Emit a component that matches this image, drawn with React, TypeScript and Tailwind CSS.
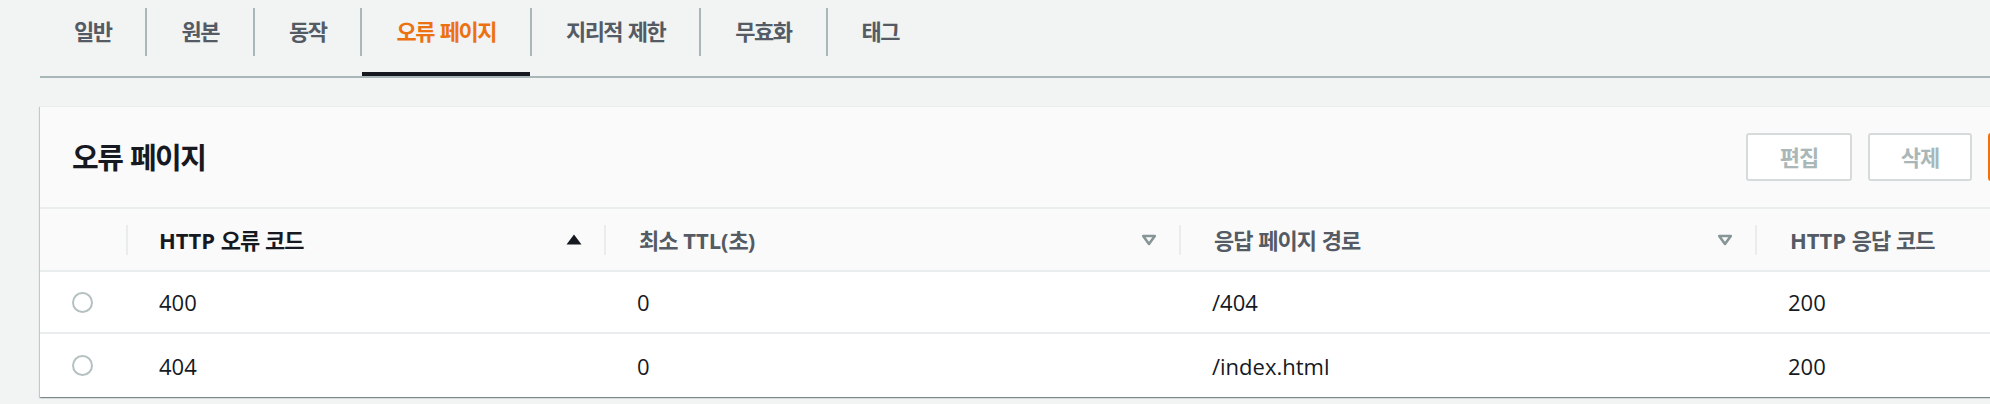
import React from "react";

function K({ t, cls = "tracking-[-1px]" }: { t: string; cls?: string }) {
  const parts = t.split(/([\uAC00-\uD7A3]+)/);
  return (
    <>
      {parts.map((p, i) =>
        /[\uAC00-\uD7A3]/.test(p) ? (
          <span key={i} className={cls}>
            {p}
          </span>
        ) : (
          <span key={i}>{p}</span>
        )
      )}
    </>
  );
}

const tabs = ["일반", "원본", "동작", "오류 페이지", "지리적 제한", "무효화", "태그"];
const active = 3;

function SortUp() {
  return (
    <svg width="16" height="11" viewBox="0 0 16 11">
      <path d="M8 0.5 L15.5 10.5 H0.5 Z" fill="#16191f" />
    </svg>
  );
}

function SortDown() {
  return (
    <svg width="16" height="12" viewBox="0 0 16 12">
      <path
        d="M2.2 2 H13.8 L8 10 Z"
        fill="none"
        stroke="#879596"
        strokeWidth="2.6"
        strokeLinejoin="round"
      />
    </svg>
  );
}

const cols = [
  { label: "HTTP 오류 코드", w: "w-[478px] shrink-0", sorted: true },
  { label: "최소 TTL(초)", w: "w-[575px] shrink-0", sorted: false },
  { label: "응답 페이지 경로", w: "w-[576px] shrink-0", sorted: false },
  { label: "HTTP 응답 코드", w: "w-[470px] shrink-0", sorted: false },
];

const rows = [
  ["400", "0", "/404", "200"],
  ["404", "0", "/index.html", "200"],
];

export default function App() {
  return (
    <div className="w-[1990px] h-[404px] overflow-hidden bg-[#f2f3f3] font-['Open_Sans','Noto_Sans_CJK_KR',sans-serif]">
      {/* Tabs */}
      <div className="ml-[40px] flex h-[78px] border-b-2 border-[#aab7b8]">
        {tabs.map((t, i) => (
          <div key={t} className="relative h-full">
            <div
              className={
                i === 0
                  ? "mt-[8px] flex h-[48px] items-center px-[34px]"
                  : "mt-[8px] flex h-[48px] items-center border-l-2 border-[#aab7b8] px-[34px]"
              }
            >
              <span
                className={
                  i === active
                    ? "text-[22px] font-bold leading-none text-[#ec7211] pb-[3px]"
                    : "text-[22px] font-bold leading-none text-[#545b64] pb-[3px]"
                }
              >
                <K t={t} cls="tracking-[-1.5px]" />
              </span>
            </div>
            {i === active && (
              <div className="absolute bottom-0 left-[2px] right-0 h-[4px] bg-[#16191f]" />
            )}
          </div>
        ))}
      </div>

      {/* Panel */}
      <div className="ml-[40px] mt-[28px] w-[2192px] bg-white shadow-[0_1px_1px_0_rgba(0,28,36,0.3),1px_1px_1px_0_rgba(0,28,36,0.15),-1px_1px_1px_0_rgba(0,28,36,0.15)]">
        {/* Header */}
        <div className="flex h-[103px] items-center border-b-2 border-t border-[#eaeded] bg-[#fafafa] pl-[32px] pr-[32px]">
          <h2 className="flex-1 text-[29px] font-bold leading-none text-[#16191f]">
            <K t="오류 페이지" cls="tracking-[-1.5px]" />
          </h2>
          <div className="flex shrink-0 gap-[16px]">
            <button className="flex h-[48px] w-[106px] items-center justify-center rounded-[3px] border-2 border-[#d5dbdb] bg-white text-[22px] font-bold text-[#aab7b8]">
              <K t="편집" />
            </button>
            <button className="flex h-[48px] w-[104px] items-center justify-center rounded-[3px] border-2 border-[#d5dbdb] bg-white text-[22px] font-bold text-[#aab7b8]">
              <K t="삭제" />
            </button>
            <button className="flex h-[48px] w-[212px] items-center justify-center rounded-[3px] border-2 border-[#ec7211] bg-[#ec7211] text-[22px] font-bold text-white">
              <K t="오류 페이지 생성" />
            </button>
          </div>
        </div>

        {/* Column header */}
        <div className="flex h-[63px] border-b-2 border-[#eaeded] bg-[#fafafa]">
          <div className="w-[86px] shrink-0" />
          {cols.map((c) => (
            <div key={c.label} className={`${c.w} flex items-center`}>
              <div className="h-[30px] w-[2px] bg-[#eaeded]" />
              <span
                className={
                  c.sorted
                    ? "flex-1 pl-[31px] text-[22px] font-bold leading-none text-[#16191f]"
                    : "flex-1 pl-[33px] text-[22px] font-bold leading-none text-[#545b64]"
                }
              >
                <K t={c.label} />
              </span>
              <div className="pr-[22px]">{c.sorted ? <SortUp /> : <SortDown />}</div>
            </div>
          ))}
        </div>

        {/* Rows */}
        {rows.map((r, ri) => (
          <div
            key={ri}
            className={
              ri === 0
                ? "flex h-[62px] items-center border-b-2 border-[#eaeded] bg-white"
                : "flex h-[63px] items-center bg-white"
            }
          >
            <div className="flex w-[86px] shrink-0 items-center pl-[32px]">
              <div className="h-[21px] w-[21px] rounded-full border-2 border-[#b5c0c1] bg-white" />
            </div>
            {r.map((v, ci) => (
              <div
                key={ci}
                className={`${cols[ci].w} pl-[33px] text-[22px] leading-none text-[#16191f]`}
              >
                {v}
              </div>
            ))}
          </div>
        ))}
      </div>
    </div>
  );
}
